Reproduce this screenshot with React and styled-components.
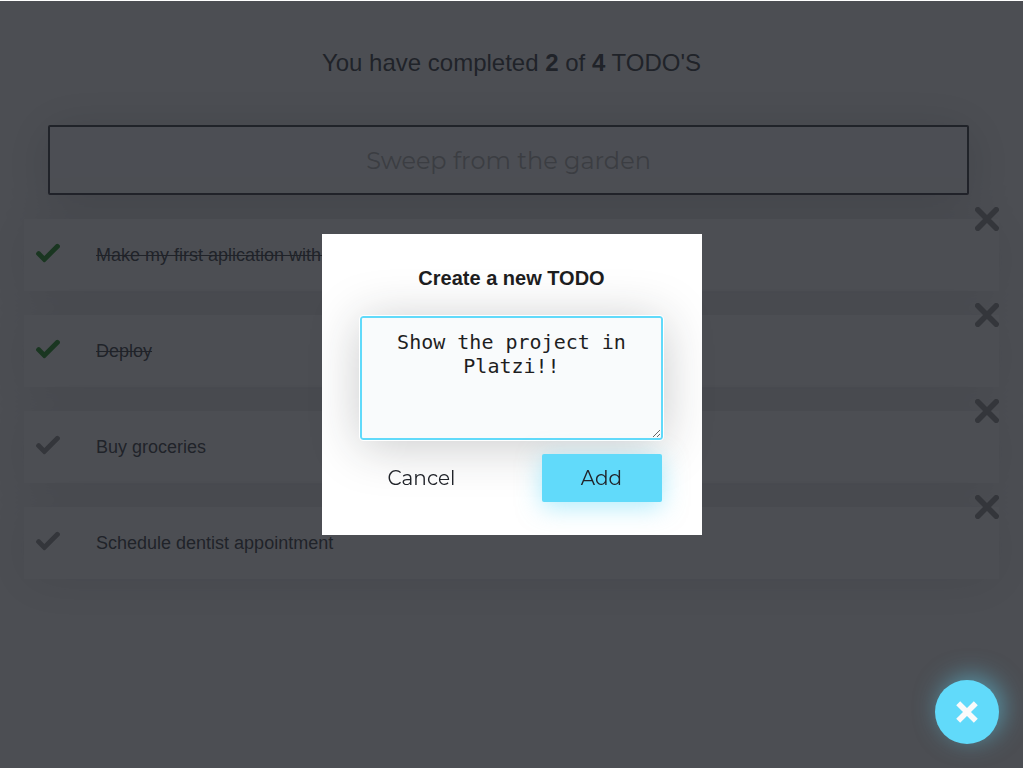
import React, { useState } from "react";
import styled, { createGlobalStyle } from "styled-components";

const GlobalStyle = createGlobalStyle`
  * { box-sizing: border-box; }
  body {
    margin: 0;
    background: #fff;
    color: #202329;
    font-family: "Liberation Sans", Arial, sans-serif;
  }
`;

const brandFont = `"Montserrat", "Inter", sans-serif`;

const Page = styled.main`
  min-height: 100vh;
  padding: 0 24px 24px;
  background: #fafafa;
  border: solid #fff;
  border-width: 1px 1px 0 0;
`;

const Counter = styled.h2`
  margin: 0;
  padding: 48px 0;
  font-size: 24px;
  line-height: 28px;
  font-weight: 400;
  text-align: center;
`;

const SearchRow = styled.div`
  display: flex;
  padding: 0 30px 0 24px;
`;

const Search = styled.input`
  flex: 1;
  min-width: 0;
  height: 70px;
  padding: 0 2px;
  border: 2px solid #202329;
  border-radius: 2px;
  background: #f9fbfc;
  box-shadow: 0 5px 50px rgba(32, 35, 41, 0.25);
  color: #1e1e1f;
  font-family: ${brandFont};
  font-size: 24px;
  font-weight: 400;
  text-align: center;

  &::placeholder {
    color: #a5a5a5;
    opacity: 1;
  }
`;

const List = styled.ul`
  display: flex;
  flex-direction: column;
  gap: 24px;
  margin: 24px 0 0;
  padding: 0;
  list-style: none;
`;

const Item = styled.li`
  position: relative;
  display: flex;
  align-items: center;
  height: 72px;
  padding-left: 12px;
  background: #fafafa;
  box-shadow: 0 5px 50px rgba(32, 35, 41, 0.15);
`;

const IconButton = styled.button`
  display: block;
  width: 24px;
  height: 24px;
  padding: 0;
  border: 0;
  background: none;
  color: ${(p) => (p.$done ? "green" : "gray")};

  svg {
    display: block;
    width: 24px;
    height: 24px;
  }
`;

const CheckButton = styled(IconButton)`
  margin-bottom: 4px;
`;

const DeleteButton = styled(IconButton)`
  position: absolute;
  top: -12px;
  right: 0;
`;

const ItemText = styled.p`
  margin: 0 0 0 36px;
  font-size: 18px;
  line-height: 24px;
  text-decoration: ${(p) => (p.$done ? "line-through" : "none")};
`;

const Overlay = styled.div`
  position: fixed;
  inset: 1px 1px 0 0;
  display: flex;
  align-items: center;
  justify-content: center;
  background: rgba(32, 35, 41, 0.8);
`;

const Form = styled.form`
  display: flex;
  flex-direction: column;
  align-items: center;
  width: 90%;
  max-width: 380px;
  padding: 33px 40px;
  background: #fff;
`;

const Label = styled.label`
  margin-bottom: 26px;
  color: #1e1e1f;
  font-size: 20px;
  line-height: 23px;
  font-weight: 700;
`;

const TextArea = styled.textarea`
  width: calc(100% + 3px);
  height: 124px;
  padding: 12px 14px;
  border: 2px solid #61dafa;
  border-radius: 3px;
  outline: 1px solid #fff;
  background: #f9fbfc;
  box-shadow: 0 5px 50px rgba(32, 35, 41, 0.25);
  color: #1e1e1f;
  font-family: "DejaVu Sans Mono", monospace;
  font-size: 20px;
  line-height: 24px;
  text-align: center;
`;

const Actions = styled.div`
  display: flex;
  justify-content: space-between;
  width: 100%;
  margin-top: 14px;
`;

const FormButton = styled.button`
  width: 120px;
  height: 48px;
  padding: 0;
  border: 0;
  border-radius: 2px;
  background: ${(p) => (p.$primary ? "#61dafa" : "transparent")};
  box-shadow: ${(p) => (p.$primary ? "0 5px 25px rgba(97, 218, 250, 0.5)" : "none")};
  color: #202329;
  font-family: ${brandFont};
  font-size: 20px;
  font-weight: 400;
`;

const CreateButton = styled.button`
  position: fixed;
  right: 25px;
  bottom: 24px;
  display: flex;
  align-items: center;
  justify-content: center;
  width: 64px;
  height: 64px;
  padding: 0;
  border: 0;
  border-radius: 50%;
  background: #61dafa;
  box-shadow: 4px -4px 25px rgba(97, 218, 250, 0.5);
  color: #fafafa;
`;

const todos = [
  { text: "Make my first aplication with React", done: true },
  { text: "Deploy", done: true },
  { text: "Buy groceries", done: false },
  { text: "Schedule dentist appointment", done: false },
];

const CheckIcon = () => (
  <svg viewBox="0 -46 417.81333 417" fill="currentColor" aria-hidden="true">
    <path d="m159.988281 318.582031c-3.988281 4.011719-9.429687 6.25-15.082031 6.25s-11.09375-2.238281-15.082031-6.25l-120.449219-120.46875c-12.5-12.5-12.5-32.769531 0-45.246093l15.082031-15.085938c12.503907-12.5 32.75-12.5 45.25 0l75.199219 75.203125 203.199219-203.203125c12.503906-12.5 32.769531-12.5 45.25 0l15.082031 15.085938c12.5 12.5 12.5 32.765624 0 45.246093zm0 0" />
  </svg>
);

const DeleteIcon = () => (
  <svg viewBox="0 0 24 24" fill="none" stroke="currentColor" strokeWidth="5.6" strokeLinecap="round" aria-hidden="true">
    <path d="M2.8 2.8 21.2 21.2M21.2 2.8 2.8 21.2" />
  </svg>
);

const CloseIcon = () => (
  <svg width="22" height="22" viewBox="0 0 22 22" fill="none" stroke="currentColor" strokeWidth="5.6" aria-hidden="true">
    <path d="M2.2 2.2 19.8 19.8M19.8 2.2 2.2 19.8" />
  </svg>
);

export default function App() {
  const [query, setQuery] = useState("");
  const [draft, setDraft] = useState("Show the project in Platzi!!");
  const completed = todos.filter((t) => t.done).length;

  return (
    <>
      <GlobalStyle />
      <Page>
        <Counter>
          You have completed <strong>{completed}</strong> of <strong>{todos.length}</strong> TODO'S
        </Counter>
        <SearchRow>
          <Search
            aria-label="Search"
            placeholder="Sweep from the garden"
            value={query}
            onChange={(e) => setQuery(e.target.value)}
          />
        </SearchRow>
        <List>
          {todos.map((t) => (
            <Item key={t.text}>
              <CheckButton type="button" $done={t.done} aria-label="Complete">
                <CheckIcon />
              </CheckButton>
              <ItemText $done={t.done}>{t.text}</ItemText>
              <DeleteButton type="button" aria-label="Delete">
                <DeleteIcon />
              </DeleteButton>
            </Item>
          ))}
        </List>
      </Page>
      <Overlay>
        <Form onSubmit={(e) => e.preventDefault()}>
          <Label htmlFor="new-todo">Create a new TODO</Label>
          <TextArea id="new-todo" value={draft} onChange={(e) => setDraft(e.target.value)} />
          <Actions>
            <FormButton type="button">Cancel</FormButton>
            <FormButton type="submit" $primary>Add</FormButton>
          </Actions>
        </Form>
      </Overlay>
      <CreateButton type="button" aria-label="Close">
        <CloseIcon />
      </CreateButton>
    </>
  );
}
